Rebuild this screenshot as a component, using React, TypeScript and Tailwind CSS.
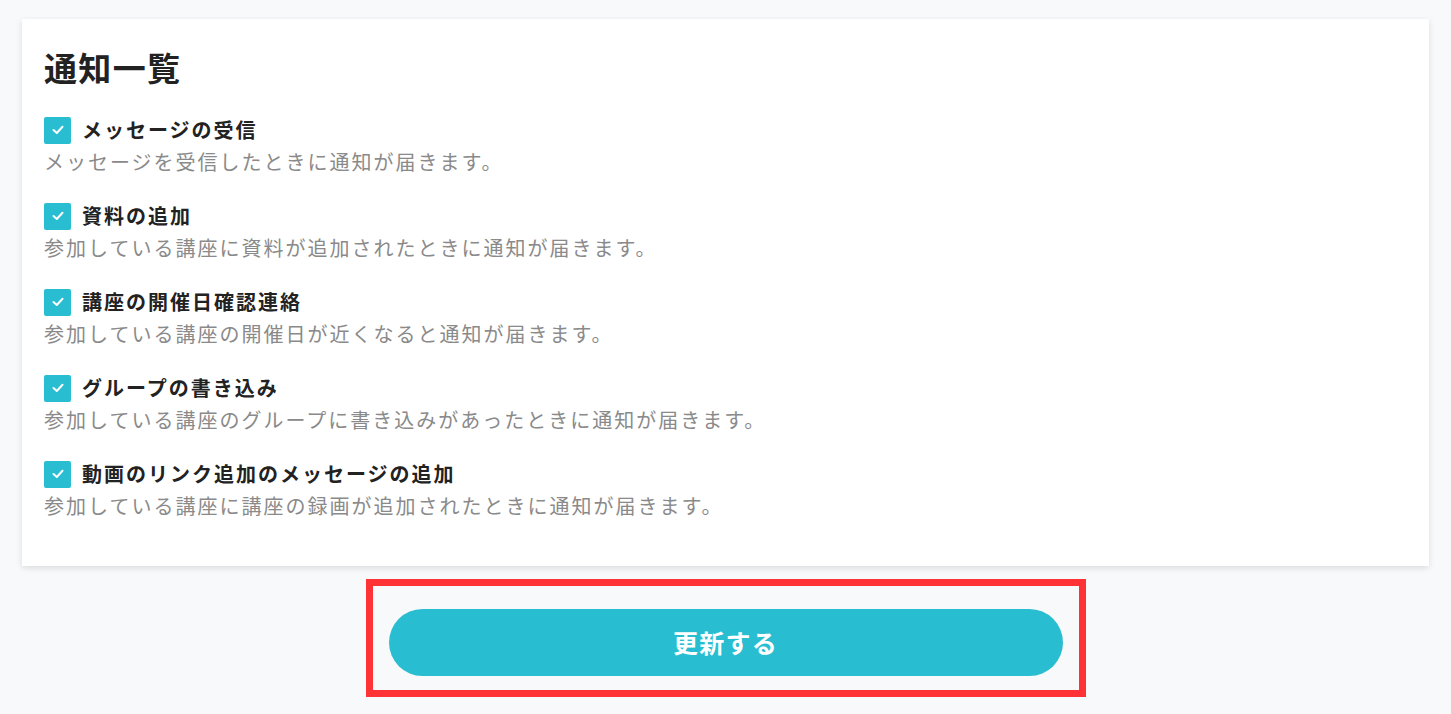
const items = [
  { title: 'メッセージの受信', desc: 'メッセージを受信したときに通知が届きます。' },
  { title: '資料の追加', desc: '参加している講座に資料が追加されたときに通知が届きます。' },
  { title: '講座の開催日確認連絡', desc: '参加している講座の開催日が近くなると通知が届きます。' },
  { title: 'グループの書き込み', desc: '参加している講座のグループに書き込みがあったときに通知が届きます。' },
  { title: '動画のリンク追加のメッセージの追加', desc: '参加している講座に講座の録画が追加されたときに通知が届きます。' },
];

function CheckBox() {
  return (
    <span className="flex h-[27px] w-[27px] shrink-0 items-center justify-center rounded-[2px] bg-[#29bdd1]">
      <svg width="12" height="10" viewBox="0 0 12 10" fill="none">
        <polyline points="1.5,5 4.8,8 10.5,1.8" stroke="white" strokeWidth="2" strokeLinecap="round" strokeLinejoin="round" />
      </svg>
    </span>
  );
}

export default function App() {
  return (
    <div className="min-h-[714px] bg-[#f8f9fb] px-[22px] pt-[19px] font-['Noto_Sans_CJK_JP',sans-serif]">
      <div className="bg-white px-[22px] pt-[24px] pb-[44px] shadow-[0_2px_6px_rgba(0,0,0,0.12)]">
        <h2 className="mb-[23px] text-[33px] leading-[48px] font-bold tracking-[0.04em] text-[#222]">通知一覧</h2>
        <div className="flex flex-col gap-[22px]">
          {items.map((item, i) => (
            <div key={i}>
              <label className="flex h-[32px] items-center gap-[11px]">
                <CheckBox />
                <span className="text-[20px] leading-[32px] font-bold tracking-[0.1em] text-[#222]">{item.title}</span>
              </label>
              <p className="text-[20px] leading-[32px] tracking-[0.1em] text-[#8a8a8a]">{item.desc}</p>
            </div>
          ))}
        </div>
      </div>

      <div className="mx-auto mt-[13px] flex h-[118px] w-[720px] justify-center border-[7px] border-[#ff3236] pt-[23px]">
        <button className="h-[67px] w-[674px] rounded-full bg-[#29bdd1] text-[25px] font-bold tracking-[0.05em] text-white">
          更新する
        </button>
      </div>
    </div>
  );
}
